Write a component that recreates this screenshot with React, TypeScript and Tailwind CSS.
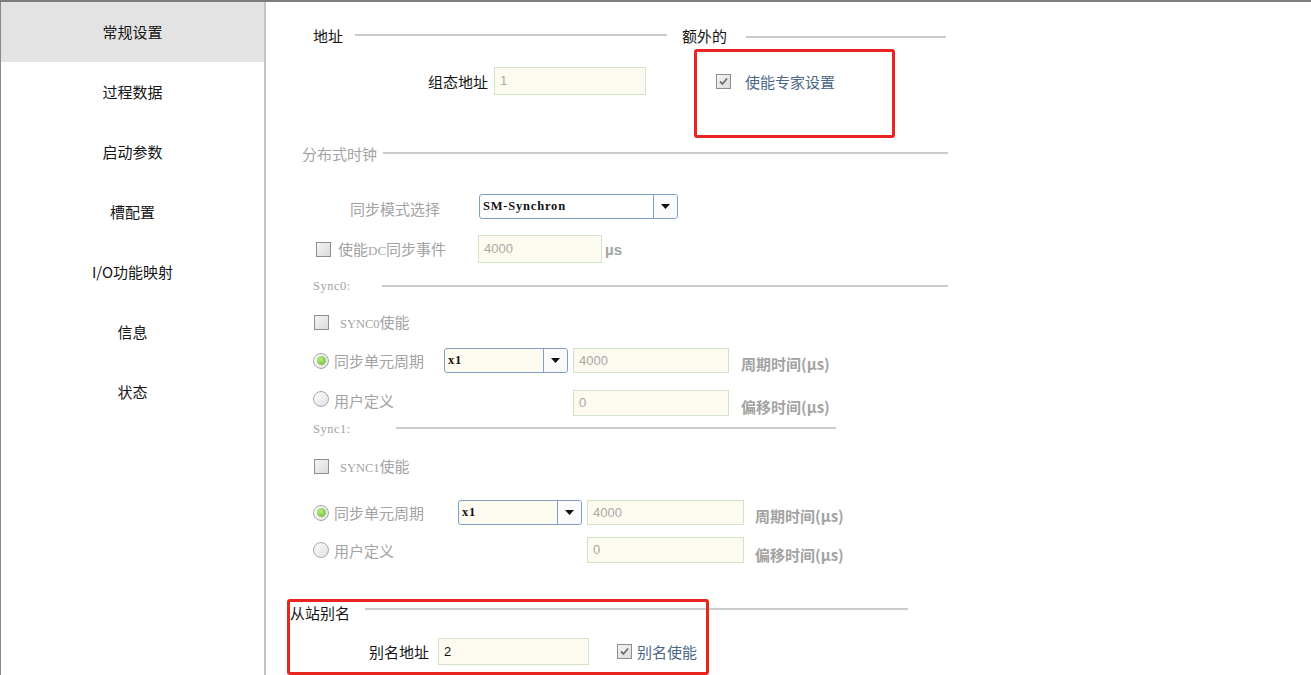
import React from "react";

const CJK = { fontFamily: '"Noto Sans CJK SC", "Noto Sans", sans-serif' };

function Line({ w, cls = "" }: { w: number; cls?: string }) {
  return <div className={`h-[2px] bg-[#cbcbcb] ${cls}`} style={{ width: w }} />;
}

function CheckBox({ checked = false, cls = "" }: { checked?: boolean; cls?: string }) {
  return (
    <div
      className={`w-[15px] h-[15px] border border-[#8e8e8e] bg-gradient-to-br from-[#f4f4f4] to-[#dcdcdc] flex items-center justify-center shrink-0 ${cls}`}
    >
      {checked && (
        <svg width="11" height="11" viewBox="0 0 11 11">
          <path d="M2 5.5 L4.5 8 L9 2.5" stroke="#6f6f6f" strokeWidth="1.8" fill="none" />
        </svg>
      )}
    </div>
  );
}

function Radio({ selected = false, cls = "" }: { selected?: boolean; cls?: string }) {
  return (
    <div
      className={`w-[16px] h-[16px] rounded-full border border-[#a9a9a9] bg-gradient-to-br from-[#fbfbfb] to-[#e2e2e2] flex items-center justify-center shrink-0 ${cls}`}
    >
      {selected && <div className="w-[9px] h-[9px] rounded-full bg-[radial-gradient(circle_at_40%_35%,#b6ec7e,#6cb83a)]" />}
    </div>
  );
}

function Input({ w, h, value, dark = false, cls = "" }: { w: number; h: number; value: string; dark?: boolean; cls?: string }) {
  return (
    <div
      className={`border border-[#d3e3c9] bg-[#fdfaf0] flex items-center pl-[5px] text-[13px] shrink-0 ${dark ? "text-[#111]" : "text-[#a9a9a9]"} ${cls}`}
      style={{ width: w, height: h, fontFamily: '"Liberation Sans", Arial, sans-serif' }}
    >
      {value}
    </div>
  );
}

function Select({ w, value, bg, divider = 24 }: { w: number; value: string; bg: string; divider?: number }) {
  return (
    <div
      className={`h-[25px] border border-[#7fa0c6] rounded-[3px] flex items-stretch shrink-0 ${bg}`}
      style={{ width: w }}
    >
      <div
        className="flex-1 flex items-center pl-[3px] text-[12.5px] font-bold text-[#111] tracking-[0.8px]"
        style={{ fontFamily: '"Liberation Serif", "Times New Roman", serif' }}
      >
        {value}
      </div>
      <div className="border-l border-[#7fa0c6] flex items-center justify-center bg-[#fbfbfb] rounded-r-[3px]" style={{ width: divider }}>
        <svg width="9" height="5" viewBox="0 0 9 5">
          <path d="M0 0 H9 L4.5 5 Z" fill="#111" />
        </svg>
      </div>
    </div>
  );
}

const gray = "text-[#a3a3a3]";

function SideItem({ label, active = false }: { label: string; active?: boolean }) {
  return (
    <div className={`h-[60px] flex items-center justify-center text-[15px] text-[#151515] ${active ? "bg-[#e3e3e3]" : ""}`}>
      {label}
    </div>
  );
}

export default function App() {
  const serifSmall = { fontFamily: '"Liberation Serif", "Times New Roman", serif' };
  return (
    <div className="w-[1311px] h-[675px] overflow-hidden bg-white relative" style={CJK}>
      <div className="h-[2px] bg-[#7d7d7d]" />
      <div className="flex h-[673px] border-l border-[#8a8a8a]">
        {/* sidebar */}
        <div className="w-[263px] shrink-0 flex flex-col">
          <SideItem label="常规设置" active />
          <SideItem label="过程数据" />
          <SideItem label="启动参数" />
          <SideItem label="槽配置" />
          <SideItem label="I/O功能映射" />
          <SideItem label="信息" />
          <SideItem label="状态" />
        </div>
        <div className="w-[2px] bg-[#c3c3c3] shrink-0" />

        {/* main */}
        <div className="flex-1 flex flex-col text-[15px]">
          {/* R1 */}
          <div className="mt-[22px] h-[22px] flex items-center">
            <span className="ml-[47px] w-[30px] text-[#151515] leading-none">地址</span>
            <Line w={312} cls="ml-[12px]" />
            <span className="ml-[15px] w-[46px] text-[#151515] leading-none">额外的</span>
            <Line w={200} cls="ml-[18px] mt-[4px]" />
          </div>
          {/* R2 */}
          <div className="mt-[21px] h-[28px] flex items-center">
            <span className="ml-[162px] w-[60px] text-[#151515] text-right leading-none">组态地址</span>
            <Input w={152} h={28} value="1" cls="ml-[6px]" />
          </div>
          {/* R3 */}
          <div className="mt-[48px] h-[20px] flex items-center">
            <span className={`ml-[36px] w-[75px] ${gray} leading-none`}>分布式时钟</span>
            <Line w={565} cls="ml-[6px]" />
          </div>
          {/* R4 */}
          <div className="mt-[31px] h-[25px] flex items-center">
            <span className={`ml-[84px] w-[129px] ${gray} leading-none pt-[3px]`}>同步模式选择</span>
            <Select w={199} value="SM-Synchron" bg="bg-white" />
          </div>
          {/* R5 */}
          <div className="mt-[16px] h-[28px] flex items-center">
            <CheckBox cls="ml-[50px]" />
            <span className={`ml-[7px] w-[140px] ${gray} leading-none`}>
              使能<span className="text-[13px]" style={serifSmall}>DC</span>同步事件
            </span>
            <Input w={124} h={28} value="4000" />
            <span className={`ml-[3px] ${gray} font-bold text-[15px] leading-none`} style={{ fontFamily: '"Liberation Sans", Arial, sans-serif' }}>µs</span>
          </div>
          {/* R6 */}
          <div className="mt-[13px] h-[20px] flex items-center">
            <span className={`ml-[47px] w-[69px] ${gray} text-[12.5px] tracking-[0.5px] leading-none`} style={serifSmall}>Sync0:</span>
            <Line w={566} />
          </div>
          {/* R7 */}
          <div className="mt-[16px] h-[20px] flex items-center">
            <CheckBox cls="ml-[48px]" />
            <span className={`ml-[11px] ${gray} leading-none`}>
              <span className="text-[12.5px]" style={serifSmall}>SYNC0</span>使能
            </span>
          </div>
          {/* R8 */}
          <div className="mt-[16px] h-[25px] flex items-center">
            <Radio selected cls="ml-[47px]" />
            <span className={`ml-[5px] w-[110px] ${gray} leading-none`}>同步单元周期</span>
            <Select w={124} value="x1" bg="bg-[#fdfaf0]" />
            <Input w={156} h={25} value="4000" cls="ml-[5px]" />
            <span className={`ml-[12px] mt-[5px] ${gray} font-bold text-[15px] leading-none`}>周期时间(µs)</span>
          </div>
          {/* R9 */}
          <div className="mt-[17px] h-[26px] flex items-center">
            <Radio cls="ml-[47px] -mt-[8px]" />
            <span className={`ml-[5px] w-[239px] ${gray} leading-none -mt-[6px]`}>用户定义</span>
            <Input w={156} h={26} value="0" />
            <span className={`ml-[12px] mt-[6px] ${gray} font-bold text-[15px] leading-none`}>偏移时间(µs)</span>
          </div>
          {/* R10 */}
          <div className="mt-[3px] h-[20px] flex items-center">
            <span className={`ml-[47px] w-[83px] ${gray} text-[12.5px] tracking-[0.5px] leading-none`} style={serifSmall}>Sync1:</span>
            <Line w={440} cls="-mt-[2px]" />
          </div>
          {/* R11 */}
          <div className="mt-[17px] h-[20px] flex items-center">
            <CheckBox cls="ml-[48px]" />
            <span className={`ml-[11px] ${gray} leading-none`}>
              <span className="text-[12.5px]" style={serifSmall}>SYNC1</span>使能
            </span>
          </div>
          {/* R12 */}
          <div className="mt-[24px] h-[25px] flex items-center">
            <Radio selected cls="ml-[47px]" />
            <span className={`ml-[5px] w-[124px] ${gray} leading-none`}>同步单元周期</span>
            <Select w={124} value="x1" bg="bg-[#fdfaf0]" />
            <Input w={157} h={25} value="4000" cls="ml-[5px]" />
            <span className={`ml-[11px] mt-[6px] ${gray} font-bold text-[15px] leading-none`}>周期时间(µs)</span>
          </div>
          {/* R13 */}
          <div className="mt-[12px] h-[26px] flex items-center">
            <Radio cls="ml-[47px]" />
            <span className={`ml-[5px] w-[253px] ${gray} leading-none`}>用户定义</span>
            <Input w={157} h={26} value="0" />
            <span className={`ml-[11px] mt-[8px] ${gray} font-bold text-[15px] leading-none`}>偏移时间(µs)</span>
          </div>
          {/* R14 */}
          <div className="mt-[40px] h-[20px] flex items-start">
            <span className="ml-[24px] w-[60px] text-[#151515] leading-[20px]">从站别名</span>
            <Line w={543} cls="ml-[15px] mt-[5px]" />
          </div>
          {/* R15 */}
          <div className="mt-[15px] h-[27px] flex items-center">
            <span className="ml-[103px] w-[61px] text-[#151515] leading-none">别名地址</span>
            <Input w={151} h={27} value="2" dark cls="ml-[8px]" />
            <CheckBox checked cls="ml-[28px]" />
            <span className="ml-[5px] text-[#4a6788] leading-none">别名使能</span>
          </div>
        </div>
      </div>

      {/* red annotation boxes */}
      <div className="absolute left-[694px] top-[49px] w-[201px] h-[89px] border-[3px] border-[#e8251f] rounded-[3px] bg-white">
        <div className="flex items-center mt-[22px] ml-[19px]">
          <CheckBox checked />
          <span className="ml-[14px] text-[15px] text-[#4a6788] leading-none">使能专家设置</span>
        </div>
      </div>
      <div className="absolute left-[287px] top-[599px] w-[422px] h-[76px] border-[3px] border-[#e8251f] rounded-[3px] pointer-events-none" />
    </div>
  );
}
